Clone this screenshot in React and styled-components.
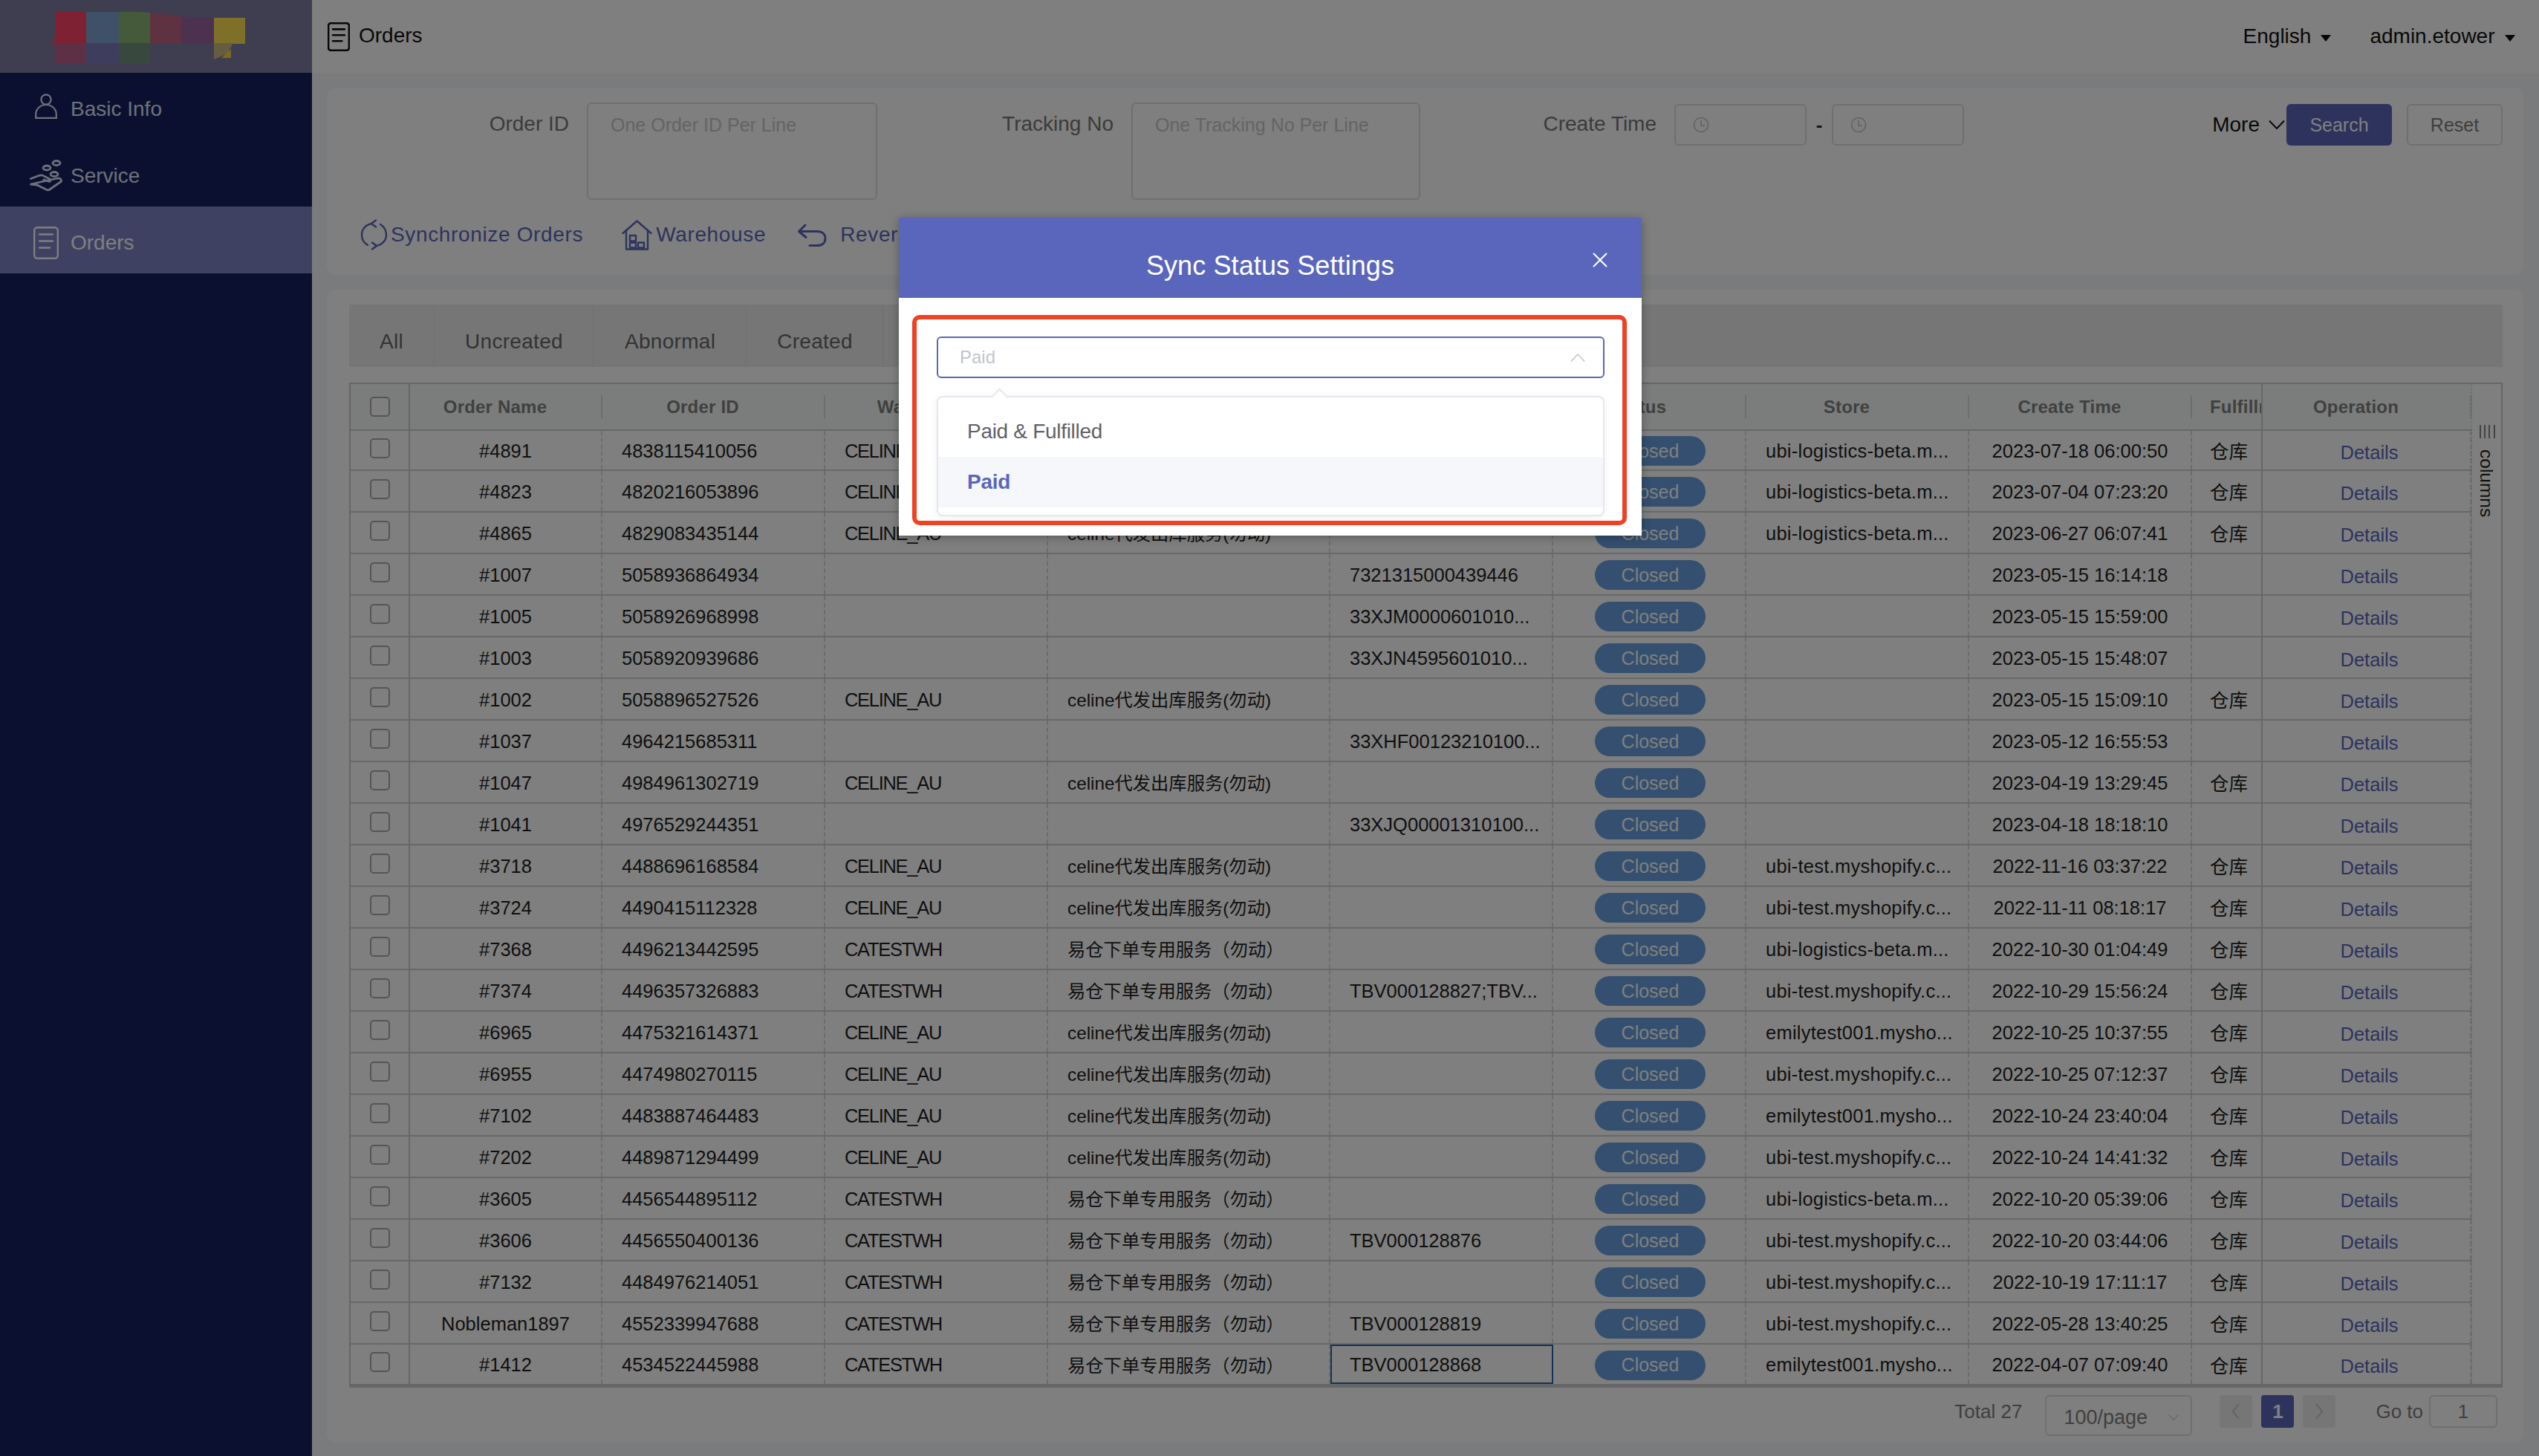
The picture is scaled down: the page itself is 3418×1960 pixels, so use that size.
import React from "react";
import styled, { createGlobalStyle } from "styled-components";

const FONT = '"Liberation Sans", "Noto Sans CJK SC", sans-serif';
const COLUMNS = "80px 259px 300px 300px 380px 300px 260px 300px 300px 95px 281px";
const BLUE = "#5a66bb";

const CELINE = "celine代发出库服务(勿动)";
const YICANG = "易仓下单专用服务（勿动）";
const BETA = "ubi-logistics-beta.m...";
const TEST = "ubi-test.myshopify.c...";
const EMILY = "emilytest001.mysho...";

const rows = [
  ["#4891", "4838115410056", "CELINE_AU", CELINE, "", BETA, "2023-07-18 06:00:50", "仓库"],
  ["#4823", "4820216053896", "CELINE_AU", CELINE, "", BETA, "2023-07-04 07:23:20", "仓库"],
  ["#4865", "4829083435144", "CELINE_AU", CELINE, "", BETA, "2023-06-27 06:07:41", "仓库"],
  ["#1007", "5058936864934", "", "", "7321315000439446", "", "2023-05-15 16:14:18", ""],
  ["#1005", "5058926968998", "", "", "33XJM0000601010...", "", "2023-05-15 15:59:00", ""],
  ["#1003", "5058920939686", "", "", "33XJN4595601010...", "", "2023-05-15 15:48:07", ""],
  ["#1002", "5058896527526", "CELINE_AU", CELINE, "", "", "2023-05-15 15:09:10", "仓库"],
  ["#1037", "4964215685311", "", "", "33XHF00123210100...", "", "2023-05-12 16:55:53", ""],
  ["#1047", "4984961302719", "CELINE_AU", CELINE, "", "", "2023-04-19 13:29:45", "仓库"],
  ["#1041", "4976529244351", "", "", "33XJQ00001310100...", "", "2023-04-18 18:18:10", ""],
  ["#3718", "4488696168584", "CELINE_AU", CELINE, "", TEST, "2022-11-16 03:37:22", "仓库"],
  ["#3724", "4490415112328", "CELINE_AU", CELINE, "", TEST, "2022-11-11 08:18:17", "仓库"],
  ["#7368", "4496213442595", "CATESTWH", YICANG, "", BETA, "2022-10-30 01:04:49", "仓库"],
  ["#7374", "4496357326883", "CATESTWH", YICANG, "TBV000128827;TBV...", TEST, "2022-10-29 15:56:24", "仓库"],
  ["#6965", "4475321614371", "CELINE_AU", CELINE, "", EMILY, "2022-10-25 10:37:55", "仓库"],
  ["#6955", "4474980270115", "CELINE_AU", CELINE, "", TEST, "2022-10-25 07:12:37", "仓库"],
  ["#7102", "4483887464483", "CELINE_AU", CELINE, "", EMILY, "2022-10-24 23:40:04", "仓库"],
  ["#7202", "4489871294499", "CELINE_AU", CELINE, "", TEST, "2022-10-24 14:41:32", "仓库"],
  ["#3605", "4456544895112", "CATESTWH", YICANG, "", BETA, "2022-10-20 05:39:06", "仓库"],
  ["#3606", "4456550400136", "CATESTWH", YICANG, "TBV000128876", TEST, "2022-10-20 03:44:06", "仓库"],
  ["#7132", "4484976214051", "CATESTWH", YICANG, "", TEST, "2022-10-19 17:11:17", "仓库"],
  ["Nobleman1897", "4552339947688", "CATESTWH", YICANG, "TBV000128819", TEST, "2022-05-28 13:40:25", "仓库"],
  ["#1412", "4534522445988", "CATESTWH", YICANG, "TBV000128868", EMILY, "2022-04-07 07:09:40", "仓库"],
];

const headers = ["Order Name", "Order ID", "Warehouse", "Service", "Tracking No", "Status", "Store", "Create Time"];

const GlobalStyle = createGlobalStyle`
  html, body {
    margin: 0;
    padding: 0;
    height: 1960px;
    overflow: hidden;
    font-family: ${FONT};
    background: #f4f6f8;
  }
  * { box-sizing: border-box; }
`;

const Page = styled.div`
  position: relative;
  display: grid;
  grid-template-columns: 420px 1fr;
  width: 3418px;
  height: 1960px;
`;

const Sidebar = styled.aside`
  background: #162060;
  display: flex;
  flex-direction: column;
`;

const LogoBand = styled.div`
  height: 98px;
  background: #7c7ca0;
`;

const NavItem = styled.div`
  height: 90px;
  padding: 8px 0 0 40px;
  display: flex;
  align-items: center;
  gap: 11px;
  font-size: 28px;
  color: ${(p) => (p.$active ? "#fff" : "#dce2f4")};
  background: ${(p) => (p.$active ? "#7c82c4" : "transparent")};
  svg { color: ${(p) => (p.$active ? "#fff" : "#dce2f4")}; }
`;

const NavIcon = styled.span`
  width: 44px;
  display: flex;
  justify-content: center;
  margin-top: ${(p) => p.$lift || 0}px;
`;

const Main = styled.main`
  display: flex;
  flex-direction: column;
  min-width: 0;
`;

const TopBar = styled.header`
  height: 98px;
  background: #fff;
  display: flex;
  align-items: center;
  padding: 0 30px 0 21px;
  font-size: 28px;
  color: #111;
`;

const Crumb = styled.div`
  display: flex;
  align-items: center;
  gap: 12px;
  span { margin-top: -2px; }
`;

const TopMenu = styled.div`
  margin-left: ${(p) => p.$left || 0}px;
  display: flex;
  align-items: center;
  &::after {
    content: "";
    margin-left: 13px;
    margin-top: 5px;
    border-left: 7px solid transparent;
    border-right: 7px solid transparent;
    border-top: 9px solid #111;
  }
`;

const Content = styled.div`
  flex: 1;
  padding: 20px 21px 18px 20px;
  display: flex;
  flex-direction: column;
  gap: 20px;
`;

const Card = styled.section`
  background: #fff;
  border-radius: 12px;
`;

const FilterCard = styled(Card)`
  height: 252px;
  padding: 20px 28px 0 8px;
`;

const FormRow = styled.div`
  display: flex;
  align-items: flex-start;
`;

const FormItem = styled.div`
  display: flex;
  align-items: flex-start;
  gap: 24px;
`;

const Label = styled.label`
  width: 318px;
  text-align: right;
  font-size: 28px;
  line-height: 58px;
  color: #767676;
`;

const AreaBox = styled.div`
  width: ${(p) => p.$width}px;
  height: 131px;
  border: 2px solid #dcdfe6;
  border-radius: 6px;
  padding: 8px 30px;
  font-size: 25px;
  line-height: 40px;
  color: #c8c8c8;
`;

const DateGroup = styled.div`
  margin-top: 2px;
  display: flex;
  align-items: center;
`;

const DateBox = styled.div`
  width: 178px;
  height: 56px;
  border: 2px solid #dcdfe6;
  border-radius: 6px;
  padding-left: 23px;
  display: flex;
  align-items: center;
`;

const DateDash = styled.span`
  width: 34px;
  text-align: center;
  font-size: 26px;
  font-weight: 700;
  color: #333;
`;

const FormActions = styled.div`
  margin-left: auto;
  margin-top: 2px;
  display: flex;
  align-items: center;
`;

const MoreToggle = styled.div`
  display: flex;
  align-items: center;
  gap: 12px;
  font-size: 28px;
  color: #111;
  margin-right: 2px;
`;

const Button = styled.button`
  height: 56px;
  width: ${(p) => p.$width}px;
  margin-left: ${(p) => p.$left || 0}px;
  border-radius: 6px;
  font-family: ${FONT};
  font-size: 25px;
  color: ${(p) => (p.$primary ? "#fff" : "#7c7c7c")};
  background: ${(p) => (p.$primary ? BLUE : "#fff")};
  border: ${(p) => (p.$primary ? "none" : "2px solid #dcdfe6")};
  padding: 0;
`;

const ActionRow = styled.div`
  margin-top: 26px;
  padding-left: 37px;
  display: flex;
  align-items: center;
`;

const ActionLink = styled.div`
  display: flex;
  align-items: center;
  gap: ${(p) => p.$gap}px;
  margin-left: ${(p) => p.$left || 0}px;
  font-size: 28px;
  letter-spacing: 0.65px;
  color: ${BLUE};
`;

const TableCard = styled(Card)`
  flex: 1;
  padding: 20px 28px 0 30px;
`;

const Tabs = styled.div`
  height: 84px;
  background: #ececec;
  display: flex;
`;

const Tab = styled.div`
  padding: 16px 40px 0 41px;
  border-right: 2px solid #e4e4e4;
  display: flex;
  align-items: center;
  font-size: 28px;
  letter-spacing: 0.3px;
  color: #666;
`;

const Table = styled.div`
  margin-top: 21px;
  display: flex;
  height: 1353px;
  border: 2px solid #cdcdcd;
  border-bottom-width: 5px;
`;

const Grid = styled.div`
  width: 2855px;
  display: flex;
  flex-direction: column;
`;

const HeadRow = styled.div`
  height: 63px;
  display: grid;
  grid-template-columns: ${COLUMNS};
  background: #f6faf8;
  border-bottom: 2px solid #cdcdcd;
`;

const HeadCell = styled.div`
  position: relative;
  display: flex;
  align-items: center;
  justify-content: ${(p) => (p.$left ? "flex-start" : "center")};
  padding: ${(p) => (p.$left ? "1px 0 0 24px" : p.$check ? "0" : "1px 30px 0 0")};
  overflow: hidden;
  white-space: nowrap;
  font-size: 24px;
  font-weight: 700;
  letter-spacing: 0.2px;
  color: #808080;
  border-right: ${(p) => (p.$fixed ? "2px solid #cdcdcd" : "none")};
  &::after {
    content: ${(p) => (p.$fixed ? "none" : '""')};
    position: absolute;
    right: 0;
    top: 15px;
    height: 31px;
    width: 2px;
    background: #d8dcd8;
  }
`;

const Row = styled.div`
  height: 56px;
  display: grid;
  grid-template-columns: ${COLUMNS};
  background: #fff;
  border-bottom: 2px solid #d0d0d0;
  &:nth-child(2) { height: 54px; }
  &:last-child { height: 53px; border-bottom: none; }
`;

const Cell = styled.div`
  display: flex;
  align-items: center;
  justify-content: ${(p) => (p.$center ? "center" : "flex-start")};
  padding: ${(p) => (p.$center ? "2px 0 0" : `2px 0 0 ${p.$pad || 26}px`)};
  white-space: nowrap;
  overflow: hidden;
  font-size: 25.5px;
  color: #1e1e1e;
  border-right: 2px ${(p) => (p.$fixed ? "solid #cdcdcd" : "dashed #d8d8d8")};
  outline: ${(p) => (p.$focus ? "2px solid #2a64b0" : "none")};
  outline-offset: -2px;
`;

const CheckCell = styled(Cell)`
  padding: 0 0 6px;
`;

const WarehouseCell = styled(Cell)`
  letter-spacing: -1.3px;
`;

const ServiceCell = styled(Cell)`
  font-size: 24.3px;
  padding-top: 0;
  padding-bottom: 1px;
`;

const FulfillCell = styled(Cell)`
  padding-top: 0;
  padding-bottom: 1px;
`;

const StoreCell = styled(Cell)`
  letter-spacing: 0.25px;
`;

const StatusCell = styled(Cell)`
  padding-left: 3px;
`;

const Check = styled.span`
  width: 27px;
  height: 27px;
  border: 2px solid #aaa;
  border-radius: 5px;
  background: #fff;
`;

const StatusPill = styled.span`
  width: 149px;
  height: 40px;
  border-radius: 20px;
  background: #689ede;
  color: #fff;
  font-size: 25px;
  display: flex;
  align-items: center;
  justify-content: center;
`;

const DetailsLink = styled.span`
  color: ${BLUE};
  padding-left: 8px;
  padding-top: 4px;
`;

const ColumnsPanel = styled.div`
  width: 40px;
  border-left: 1px dashed #cdcdcd;
  padding: 55px 0 0 0;
  display: flex;
  flex-direction: column;
  gap: 15px;
`;

const ColumnsGlyphWrap = styled.span`
  display: flex;
  padding-left: 10px;
`;

const ColumnsText = styled.span`
  align-self: flex-start;
  writing-mode: vertical-rl;
  font-size: 24.5px;
  color: #222;
  margin-left: 5px;
`;

const Pagination = styled.div`
  margin-top: 10px;
  padding-right: 7px;
  display: flex;
  align-items: flex-start;
  justify-content: flex-end;
  font-size: 26px;
  color: #7e7e7e;
`;

const PagerText = styled.span`
  line-height: 44px;
  margin: ${(p) => p.$margin};
`;

const PageSize = styled.div`
  width: 198px;
  height: 55px;
  border: 2px solid #dcdfe6;
  border-radius: 6px;
  padding: 5px 16px 0 23px;
  display: flex;
  align-items: center;
  justify-content: space-between;
  font-size: 27px;
  color: #808080;
`;

const PageButton = styled.div`
  width: 44px;
  height: 44px;
  margin-left: ${(p) => p.$left}px;
  border-radius: 4px;
  background: ${(p) => (p.$active ? BLUE : "#ececec")};
  color: ${(p) => (p.$active ? "#fff" : "#c0c4cc")};
  font-weight: 700;
  display: flex;
  align-items: center;
  justify-content: center;
`;

const GoInput = styled.div`
  width: 92px;
  height: 44px;
  border: 2px solid #dcdfe6;
  border-radius: 6px;
  display: flex;
  align-items: center;
  justify-content: center;
  color: #808080;
`;

const Mask = styled.div`
  position: absolute;
  inset: 0;
  background: rgba(0, 0, 0, 0.5);
`;

const Dialog = styled.div`
  position: absolute;
  left: 1210px;
  top: 293px;
  width: 1000px;
  height: 428px;
  background: #fff;
  box-shadow: 0 2px 12px rgba(0, 0, 0, 0.3);
`;

const DialogHead = styled.div`
  position: relative;
  height: 108px;
  padding-top: 22px;
  background: ${BLUE};
  display: flex;
  align-items: center;
  justify-content: center;
  font-size: 36px;
  letter-spacing: 0.1px;
  color: #fff;
`;

const CloseButton = styled.span`
  position: absolute;
  right: 46px;
  top: 47px;
  display: flex;
`;

const DialogBody = styled.div`
  padding: 52px 50px 0 51px;
`;

const SelectWrap = styled.div`
  position: relative;
`;

const SelectBox = styled.div`
  height: 56px;
  border: 2px solid ${BLUE};
  border-radius: 6px;
  padding: 0 24px 0 29px;
  display: flex;
  align-items: center;
  justify-content: space-between;
  font-size: 24px;
  color: #c0c4cc;
`;

const Dropdown = styled.div`
  position: absolute;
  left: 0;
  right: 0;
  top: 80px;
  height: 162px;
  padding: 12px 0;
  background: #fff;
  border: 2px solid #e4e7ed;
  border-radius: 8px;
  box-shadow: 0 2px 12px rgba(0, 0, 0, 0.06);
  &::before {
    content: "";
    position: absolute;
    left: 74px;
    top: -9px;
    width: 15px;
    height: 15px;
    background: #fff;
    border-top: 2px solid #e4e7ed;
    border-left: 2px solid #e4e7ed;
    transform: rotate(45deg);
  }
`;

const Option = styled.div`
  height: 68px;
  padding-left: 39px;
  display: flex;
  align-items: center;
  font-size: 28px;
  letter-spacing: -0.3px;
  font-weight: ${(p) => (p.$selected ? 700 : 400)};
  color: ${(p) => (p.$selected ? BLUE : "#606266")};
  background: ${(p) => (p.$selected ? "#f5f7fa" : "#fff")};
`;

const RedFrame = styled.div`
  position: absolute;
  left: 18px;
  top: 131px;
  width: 962px;
  height: 283px;
  border: 6px solid #ee4225;
  border-radius: 10px;
  pointer-events: none;
`;

function DocIcon({ width = 34, height = 44, color = "currentColor", stroke = 2.4 }) {
  return (
    <svg width={width} height={height} viewBox="0 0 34 44" fill="none" stroke={color} strokeWidth={stroke} strokeLinecap="round">
      <rect x="1.2" y="1.2" width="31.6" height="41.6" rx="4" />
      <path d="M8 10.5H26M8 19.5H26M8 28.5H22" />
    </svg>
  );
}

function PersonIcon() {
  return (
    <svg width="30" height="34" viewBox="0 0 30 34" fill="none" stroke="currentColor" strokeWidth="2.2">
      <circle cx="15" cy="8" r="6.6" />
      <path d="M1.2 32.8V28C1.2 20.5 7.5 15 15 15S28.8 20.5 28.8 28V32.8Z" />
    </svg>
  );
}

function ServiceIcon() {
  return (
    <svg width="44" height="44" viewBox="0 0 44 44" fill="none" stroke="currentColor" strokeWidth="2.8" strokeLinejoin="round" strokeLinecap="round">
      <ellipse cx="36" cy="4.5" rx="5" ry="3" />
      <ellipse cx="23" cy="11" rx="5" ry="3" />
      <ellipse cx="33" cy="19.5" rx="5" ry="3" />
      <path d="M1.5 25.5L12 21.5C15 20.5 18 21 20 22.5L27 26C29 27.5 27.5 30 25 29L19 27" />
      <path d="M28 27L38 25C41 24.5 43.5 27 42 29.5L27 40C25.5 41 23.5 41 22 40L10 34L1.5 33Z" />
    </svg>
  );
}

function SyncIcon() {
  return (
    <svg width="37" height="42" viewBox="0 0 37 42" fill="none" stroke={BLUE} strokeWidth="2.4" strokeLinecap="round" strokeLinejoin="round">
      <path d="M16 6C8 7 2 13 2 21C2 27 5 32 10 35" />
      <path d="M21 36C29 35 35 29 35 21C35 15 32 10 27 7" />
      <path d="M21 1.5L15 6L21 10.5M16 31.5L22 36L16 40.5" />
    </svg>
  );
}

function WarehouseIcon() {
  return (
    <svg width="41" height="41" viewBox="0 0 41 41" fill="none" stroke={BLUE} strokeWidth="2.4" strokeLinejoin="round" strokeLinecap="round">
      <path d="M1.5 18L20.5 1.5L39.5 18" />
      <path d="M6 14V39.5H35V14" />
      <rect x="11" y="21" width="8" height="7.5" />
      <rect x="11" y="30.5" width="8" height="7" />
      <rect x="22" y="30.5" width="8" height="7" />
    </svg>
  );
}

function ReverseIcon() {
  return (
    <svg width="40" height="31" viewBox="0 0 40 31" fill="none" stroke={BLUE} strokeWidth="3" strokeLinecap="round" strokeLinejoin="round">
      <path d="M11 2L2.5 10.5L12 18.5" />
      <path d="M3 10.5H27C33.5 10.5 38 14 38 20C38 26 33.5 29.5 27 29.5H17" />
    </svg>
  );
}

function ClockIcon() {
  return (
    <svg width="22" height="22" viewBox="0 0 22 22" fill="none" stroke="#c0c4cc" strokeWidth="1.6">
      <circle cx="11" cy="11" r="9.5" />
      <path d="M11 5V12H16" />
    </svg>
  );
}

function Chevron({ up, width = 22, height = 12, color = "#c0c4cc", stroke = 1.6 }) {
  return (
    <svg width={width} height={height} viewBox="0 0 22 12" fill="none" stroke={color} strokeWidth={stroke} preserveAspectRatio="none">
      <path d={up ? "M1 11.5L11 1L21 11.5" : "M1 .5L11 11L21 .5"} />
    </svg>
  );
}

function PagerArrow({ left }) {
  return (
    <svg width="12" height="24" viewBox="0 0 12 24" fill="none" stroke="#c0c4cc" strokeWidth="2">
      <path d={left ? "M10 2L2 12L10 22" : "M2 2L10 12L2 22"} />
    </svg>
  );
}

// the logo in the picture is a coarse mosaic, so it is just blocks of colour
function Logo() {
  return (
    <svg width="420" height="98" viewBox="0 0 420 98">
      <path d="M74 16H116V58H74Z" fill="#fc4466" />
      <path d="M116 16H160V58H116Z" fill="#7ca2d0" />
      <path d="M160 16H186L202 17V58H160Z" fill="#88b474" />
      <path d="M202 17L244 22V58H202Z" fill="#be6482" />
      <path d="M244 22L262 24H288V58H244Z" fill="#9862a0" />
      <path d="M288 24H330V59H288Z" fill="#ffe052" />
      <path d="M74 58H116V86H82L74 84Z" fill="#bc608a" />
      <path d="M116 58H160V86H116Z" fill="#7e7abc" />
      <path d="M160 58H202V86H160Z" fill="#70907e" />
      <path d="M288 58H314L306 72L288 80Z" fill="#ccb882" />
      <path d="M298 78L311 66V78Z" fill="#ffd03e" />
      <path d="M68 62L74 52V58L70 62Z" fill="#fc4466" />
    </svg>
  );
}

function ColumnsGlyph() {
  return (
    <svg width="21" height="18" viewBox="0 0 21 18" stroke="#555" strokeWidth="1.4">
      <path d="M1 0V18M7 0V18M13 0V18M20 0V18" />
    </svg>
  );
}

export default function App() {
  return (
    <>
      <GlobalStyle />
      <Page>
        <Sidebar>
          <LogoBand><Logo /></LogoBand>
          <NavItem>
            <NavIcon $lift={-8}><PersonIcon /></NavIcon>
            Basic Info
          </NavItem>
          <NavItem>
            <NavIcon><ServiceIcon /></NavIcon>
            Service
          </NavItem>
          <NavItem $active>
            <NavIcon><DocIcon /></NavIcon>
            Orders
          </NavItem>
        </Sidebar>

        <Main>
          <TopBar>
            <Crumb>
              <DocIcon width={30} height={39} color="#111" stroke={3} />
              <span>Orders</span>
            </Crumb>
            <TopMenu $left={2451}>English</TopMenu>
            <TopMenu $left={52}>admin.etower</TopMenu>
          </TopBar>

          <Content>
            <FilterCard>
              <FormRow>
                <FormItem>
                  <Label>Order ID</Label>
                  <AreaBox $width={391}>One Order ID Per Line</AreaBox>
                </FormItem>
                <FormItem>
                  <Label>Tracking No</Label>
                  <AreaBox $width={389}>One Tracking No Per Line</AreaBox>
                </FormItem>
                <FormItem>
                  <Label>Create Time</Label>
                  <DateGroup>
                    <DateBox><ClockIcon /></DateBox>
                    <DateDash>-</DateDash>
                    <DateBox><ClockIcon /></DateBox>
                  </DateGroup>
                </FormItem>
                <FormActions>
                  <MoreToggle>
                    More
                    <Chevron color="#111" stroke={2} />
                  </MoreToggle>
                  <Button $primary $width={142}>Search</Button>
                  <Button $width={129} $left={20}>Reset</Button>
                </FormActions>
              </FormRow>
              <ActionRow>
                <ActionLink $gap={4}><SyncIcon />Synchronize Orders</ActionLink>
                <ActionLink $gap={5} $left={52}><WarehouseIcon />Warehouse</ActionLink>
                <ActionLink $gap={18} $left={42}><ReverseIcon />Reverse</ActionLink>
              </ActionRow>
            </FilterCard>

            <TableCard>
              <Tabs>
                <Tab>All</Tab>
                <Tab>Uncreated</Tab>
                <Tab>Abnormal</Tab>
                <Tab>Created</Tab>
              </Tabs>
              <Table>
                <Grid>
                  <HeadRow>
                    <HeadCell $fixed $check><Check /></HeadCell>
                    {headers.map((h) => <HeadCell key={h}>{h}</HeadCell>)}
                    <HeadCell $left $fixed>Fulfillment</HeadCell>
                    <HeadCell>Operation</HeadCell>
                  </HeadRow>
                  {rows.map((r, i) => (
                    <Row key={r[1]}>
                      <CheckCell $center $fixed><Check /></CheckCell>
                      <Cell $center>{r[0]}</Cell>
                      <Cell>{r[1]}</Cell>
                      <WarehouseCell>{r[2]}</WarehouseCell>
                      <ServiceCell>{r[3]}</ServiceCell>
                      <Cell $focus={i === rows.length - 1}>{r[4]}</Cell>
                      <StatusCell $center><StatusPill>Closed</StatusPill></StatusCell>
                      <StoreCell>{r[5]}</StoreCell>
                      <Cell $center>{r[6]}</Cell>
                      <FulfillCell $fixed $pad={24}>{r[7]}</FulfillCell>
                      <Cell $center><DetailsLink>Details</DetailsLink></Cell>
                    </Row>
                  ))}
                </Grid>
                <ColumnsPanel>
                  <ColumnsGlyphWrap><ColumnsGlyph /></ColumnsGlyphWrap>
                  <ColumnsText>columns</ColumnsText>
                </ColumnsPanel>
              </Table>
              <Pagination>
                <PagerText $margin="0 31px 0 0">Total 27</PagerText>
                <PageSize>100/page<Chevron width={14} height={8} /></PageSize>
                <PageButton $left={37}><PagerArrow left /></PageButton>
                <PageButton $left={12} $active>1</PageButton>
                <PageButton $left={12}><PagerArrow /></PageButton>
                <PagerText $margin="0 8px 0 54px">Go to</PagerText>
                <GoInput>1</GoInput>
              </Pagination>
            </TableCard>
          </Content>
        </Main>

        <Mask />

        <Dialog>
          <DialogHead>
            Sync Status Settings
            <CloseButton>
              <svg width="20" height="20" viewBox="0 0 20 20" stroke="#fff" strokeWidth="2">
                <path d="M1 1L19 19M19 1L1 19" />
              </svg>
            </CloseButton>
          </DialogHead>
          <DialogBody>
            <SelectWrap>
              <SelectBox>
                Paid
                <Chevron up width={20} height={11} />
              </SelectBox>
              <Dropdown>
                <Option>Paid &amp; Fulfilled</Option>
                <Option $selected>Paid</Option>
              </Dropdown>
            </SelectWrap>
          </DialogBody>
          <RedFrame />
        </Dialog>
      </Page>
    </>
  );
}
